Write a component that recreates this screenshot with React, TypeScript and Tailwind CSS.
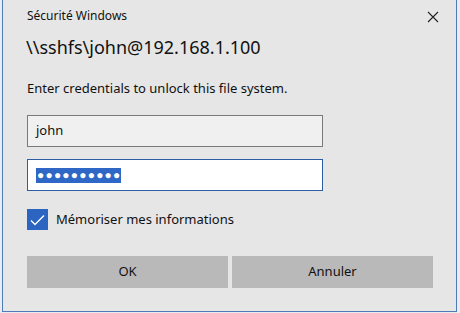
import React from "react";

export default function App() {
  const font = { fontFamily: '"Noto Sans", "Open Sans", sans-serif' };
  return (
    <div className="w-[460px] h-[313px] bg-[#e9edf2] overflow-hidden" style={font}>
      <div className="ml-[2px] w-[455px] h-[312px] bg-[#e6e6e6] border-l border-r border-b border-[#4f7bb8] flex flex-col">
        <div className="flex items-start justify-between h-[30px] pl-[24px] pr-[17px] pt-[8px]">
          <span className="text-[12px] leading-[16px] text-[#111]">Sécurité Windows</span>
          <svg width="12" height="12" viewBox="0 0 12 12" className="mt-[3px]">
            <path d="M1 1L11 11M11 1L1 11" stroke="#222" strokeWidth="1.1" />
          </svg>
        </div>
        <div className="pl-[23px] text-[18px] leading-[24px] text-[#111] mt-[5px]">\\sshfs\john@192.168.1.100</div>
        <div className="pl-[24px] text-[13px] leading-[18px] text-[#111] mt-[20px]">
          Enter credentials to unlock this file system.
        </div>
        <div className="pl-[24px] mt-[18px] flex flex-col gap-[12px]">
          <div className="w-[296px] h-[32px] border border-[#7a7a7a] bg-[#f0f0f0] flex items-center pl-[8px] text-[13px] text-[#111]">
            john
          </div>
          <div className="w-[296px] h-[32px] border border-[#2c5ea5] bg-white flex items-center pl-[8px]">
            <span className="bg-[#2e67c6] text-white h-[15px] flex items-center pl-[1px] text-[12px] tracking-[1.2px] leading-none">
              ●●●●●●●●●●
            </span>
          </div>
        </div>
        <div className="pl-[24px] mt-[18px] flex items-center gap-[8px]">
          <div className="w-[21px] h-[21px] bg-[#2b64c1] flex items-center justify-center">
            <svg width="15" height="12" viewBox="0 0 15 12">
              <path d="M1 6.5L5 10.5L14 1.5" stroke="white" strokeWidth="1.4" fill="none" />
            </svg>
          </div>
          <span className="text-[13px] text-[#111]">Mémoriser mes informations</span>
        </div>
        <div className="pl-[24px] mt-[26px] flex gap-[4px]">
          <div className="w-[201px] h-[32px] bg-[#b9b9b9] flex items-center justify-center text-[13px] text-[#111]">OK</div>
          <div className="w-[201px] h-[32px] bg-[#b9b9b9] flex items-center justify-center text-[13px] text-[#111]">Annuler</div>
        </div>
      </div>
    </div>
  );
}
